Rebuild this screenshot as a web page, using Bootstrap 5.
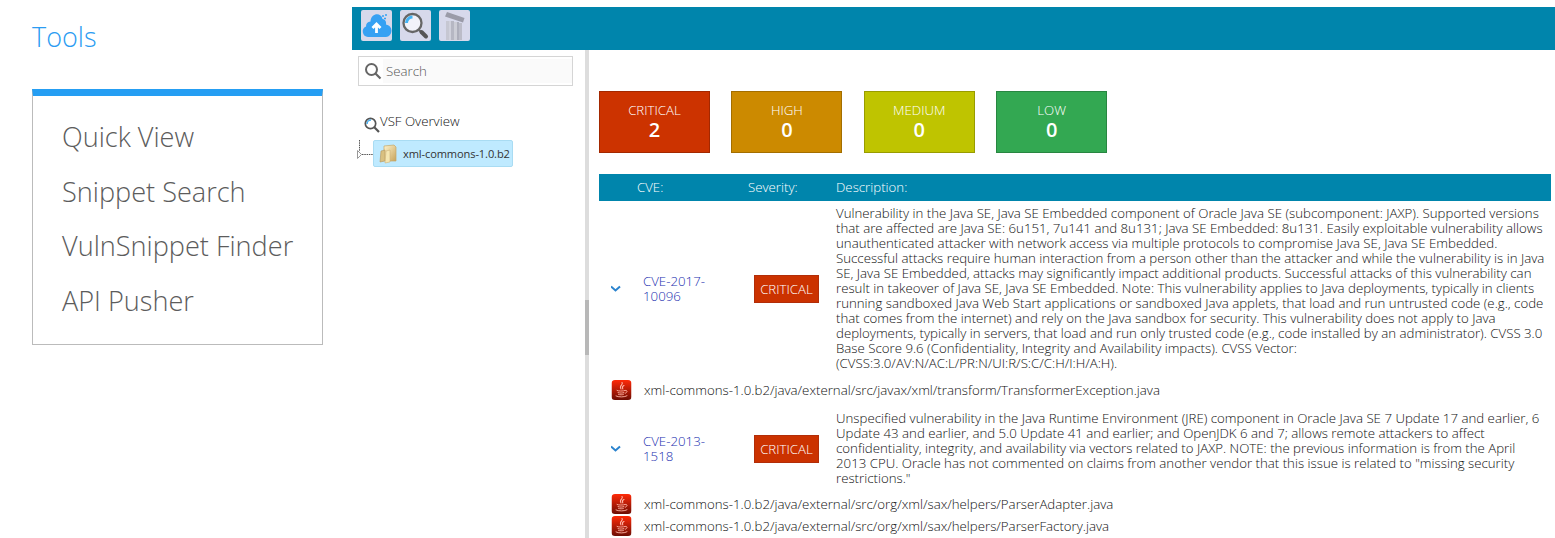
<!DOCTYPE html>
<html lang="en">
<head>
<meta charset="utf-8">
<title>VulnSnippet Finder</title>
<link href="https://cdn.jsdelivr.net/npm/bootstrap@5.3.0/dist/css/bootstrap.min.css" rel="stylesheet">
<style>
body{font-family:"Open Sans",sans-serif;font-weight:300;font-size:13.25px;line-height:15px;color:#111;background:#fff;width:1555px;height:538px;overflow:hidden}
.tools{width:352px;padding:20px 30px 0 32px}
.tools h1{font-size:27px;line-height:34px;font-weight:300;color:#2b9cf2;margin:0 0 35px}
.toolbox{border:1px solid #bbb;border-top:7px solid #259ef3;height:256px;padding:14px 0 0 29px;width:291px}
.toolbox a{display:block;font-size:27.1px;line-height:54.6px;color:#5c5c5c;text-decoration:none;white-space:nowrap}
.vsf{width:1203px;padding-top:7px}
.topbar{height:43px;background:#0085ac;padding:3px 0 0 9px;gap:8px}
.toolbtn{width:31px;height:31px;background:#d7d9eb;border:0;border-radius:2px;padding:0}
.side{width:233px;padding:6px 0 0 4px}
.searchbox{width:215px;height:30px;border:1px solid #d5d5d5;margin-left:2px;padding-left:5px}
.searchbox span{background:#fafafa;flex:1;height:24px;line-height:24px;padding-left:3px;margin-left:1px;color:#555}
.splitter{width:4px;background:#ddd;padding-top:250px}
.splitter div{height:55px;background:#b8b8b8}
.overview{margin:28px 0 0 8px;height:18px}
.overview svg{margin-top:3px}
.treeitem{width:140px;height:27px;background:#bfeaff;border:1px solid #a9dcf3;border-radius:2px;padding-left:5px;gap:6px;font-size:11.1px;font-weight:400;letter-spacing:-.12px;color:#333;white-space:nowrap}
.main{padding:41px 4px 0 10px}
.stat{width:111px;height:62px;color:#fff;padding-top:11px;border:1px solid #0003;text-align:center}
.stat b{display:block;font-size:20px;line-height:23px;font-weight:600}
.tiles{gap:21.4px;margin-bottom:21px}
.cverow{display:grid;grid-template-columns:38px 111px 88px 1fr;align-items:center;white-space:nowrap}
.head{height:27px;background:#0085ac;color:#fff}
.sev{background:#cb3200;border:1px solid #b22d08;color:#fff;width:65px;height:28px;line-height:26px;text-align:center;margin-left:6px}
.cve{color:#2430b0;padding-left:6px}
.filerow{height:22px;padding-left:12px;gap:12px;white-space:nowrap}
</style>
<script src="https://cdn.jsdelivr.net/npm/bootstrap@5.3.0/dist/js/bootstrap.bundle.min.js"></script>
</head>
<body class="d-flex">
<svg width="0" height="0" class="position-absolute"><defs>
<linearGradient id="jred" x2="0" y2="1"><stop stop-color="#ff2a08"/><stop offset="1" stop-color="#6d0d04"/></linearGradient>
<linearGradient id="tan" x2="1" y2="1"><stop stop-color="#fff4cd"/><stop offset="1" stop-color="#c8a45c"/></linearGradient>
<symbol id="java" viewBox="0 0 20 20"><rect width="20" height="20" rx="3.500" fill="url(#jred)"/><g fill="none" stroke="#ffb5a5" stroke-linecap="round"><path d="M10.5 2.500c2 2-3.500 3-1 6.500M12.500 5.500c-2.500 1-1.500 2-1.200 3.500" stroke-width="1.100"/><path d="M5.500 10.500c1 .8 6.500.8 8 0M6.500 12.600c1.500.7 5 .7 6 0M7 14.400c1.500.6 4 .6 5 0M14 10.500c2.500-.5 2 2-.3 2.800M4.500 16c2 1.300 9 1.300 11-.2" stroke-width=".9"/></g></symbol>
<symbol id="lens" viewBox="0 0 16 16"><circle cx="6.500" cy="6.500" r="5.200" fill="#fff" fill-opacity=".5" stroke="#555" stroke-width="1.700"/><path d="M10.300 10.300l4.700 4.700" stroke="#555" stroke-width="2.200"/></symbol>
</defs></svg>
<aside class="tools flex-shrink-0"><h1>Tools</h1>
<nav class="toolbox"><a href="#">Quick View</a><a href="#">Snippet Search</a><a href="#">VulnSnippet Finder</a><a href="#">API Pusher</a></nav></aside>
<div class="vsf d-flex flex-column flex-shrink-0">
<header class="topbar d-flex flex-shrink-0">
<button class="toolbtn"><svg class="d-block" width="31" height="31"><path d="M7 27a5.500 5.500 0 0 1-2-10.500 5 5 0 0 1 4.500-5C10 3 20 2 21.500 9c3 .5 4 3 3.500 5.500A6.300 6.300 0 0 1 25 27z" fill="#36a1f3"/><path d="M15.500 23v-8M11.500 18l4-4 4 4" fill="none" stroke="#fff" stroke-width="2.800"/><path d="M21 6h2M24 5h2M23 8.500h2" stroke="#36a1f3" stroke-width="1.500"/></svg></button>
<button class="toolbtn"><svg class="d-block" width="31" height="31"><circle cx="12.500" cy="13" r="9" fill="#f2f2fa" stroke="#666" stroke-width="2.300"/><path d="M6.500 13a6 6 0 0 1 6-6" fill="none" stroke="#42b3f4" stroke-width="3"/><path d="M18.500 19.500l3 3" stroke="#666" stroke-width="2"/><path d="M21.500 22l4.500 4.500" stroke="#555" stroke-width="4" stroke-linecap="round"/></svg></button>
<button class="toolbtn"><svg class="d-block" width="31" height="31"><path d="M8 2l17.500 6-1.500 4.500-18-6z" fill="#9a9ba8"/><path d="M7 11h3v19H7z" fill="#c6c7d2"/><path d="M10 11h2v19h-2z" fill="#d0d1dc"/><path d="M12 11h3v19h-3z" fill="#b6b7c3"/><path d="M15 12h3v18h-3z" fill="#cccdd6"/><path d="M18 12h2v18h-2z" fill="#adaebb"/><path d="M20 13h3v17h-3z" fill="#bbbcc8"/></svg></button>
</header>
<div class="d-flex flex-grow-1">
<aside class="side flex-shrink-0">
<div class="searchbox d-flex align-items-center"><svg width="18" height="18" viewBox="0 0 18 18"><circle cx="7.500" cy="7.500" r="5.500" fill="none" stroke="#666" stroke-width="2"/><path d="M11.500 11.500l5 5" stroke="#666" stroke-width="2.200"/></svg><span>Search</span></div>
<div class="overview d-flex"><svg width="16" height="16"><use href="#lens" width="16" height="16"/><path d="M3 7a4 4 0 0 1 4-4" fill="none" stroke="#43aef0" stroke-width="1.500"/></svg><span>VSF Overview</span></div>
<div class="d-flex mt-2"><svg width="17" height="27"><path d="M3.500 0v11M6 14.500h11" stroke="#555" stroke-dasharray="1.500 .8"/><path d="M1.500 10.500v8l4-4z" fill="#fff" stroke="#999"/></svg>
<div class="treeitem d-flex align-items-center"><svg class="flex-shrink-0" width="18" height="20" viewBox="0 0 18 20"><path d="M5 2l10-1 2 2v14H8L5 16z" fill="url(#tan)" stroke="#c4a868" stroke-width=".7"/><path d="M2 7l4-1v11l-5 1z" fill="#d9c081" stroke="#b5965a" stroke-width=".6"/><path d="M7 7l4-1v12l-5 1z" fill="#f5e6b2" stroke="#cfb378" stroke-width=".6"/></svg><span>xml-commons-1.0.b2</span></div></div>
</aside>
<div class="splitter flex-shrink-0"><div></div></div>
<main class="main flex-grow-1">
<div class="tiles d-flex">
<div class="stat" style="background:#cc3300">CRITICAL<b>2</b></div><div class="stat" style="background:#cc8a00">HIGH<b>0</b></div><div class="stat" style="background:#bfc400">MEDIUM<b>0</b></div><div class="stat" style="background:#33a852">LOW<b>0</b></div></div>
<div class="cverow head"><i></i><span>CVE:</span><span>Severity:</span><span>Description:</span></div>
<div class="cverow" style="height:175px"><svg class="ms-2 ps-1" width="17" height="10"><path d="M0 2.500l4.500 4 4.500-4" fill="none" stroke="#2b83ce" stroke-width="2"/></svg><span class="cve">CVE-2017-<br>10096</span><span class="sev">CRITICAL</span>
<div>Vulnerability in the Java SE, Java SE Embedded component of Oracle Java SE (subcomponent: JAXP). Supported versions<br>that are affected are Java SE: 6u151, 7u141 and 8u131; Java SE Embedded: 8u131. Easily exploitable vulnerability allows<br>unauthenticated attacker with network access via multiple protocols to compromise Java SE, Java SE Embedded.<br>Successful attacks require human interaction from a person other than the attacker and while the vulnerability is in Java<br>SE, Java SE Embedded, attacks may significantly impact additional products. Successful attacks of this vulnerability can<br>result in takeover of Java SE, Java SE Embedded. Note: This vulnerability applies to Java deployments, typically in clients<br>running sandboxed Java Web Start applications or sandboxed Java applets, that load and run untrusted code (e.g., code<br>that comes from the internet) and rely on the Java sandbox for security. This vulnerability does not apply to Java<br>deployments, typically in servers, that load and run only trusted code (e.g., code installed by an administrator). CVSS 3.0<br>Base Score 9.6 (Confidentiality, Integrity and Availability impacts). CVSS Vector:<br>(CVSS:3.0/AV:N/AC:L/PR:N/UI:R/S:C/C:H/I:H/A:H).</div></div>
<div class="filerow d-flex align-items-center" style="height:28px"><svg width="21" height="20"><use href="#java" x=".5" width="20" height="20"/></svg><span>xml-commons-1.0.b2/java/external/src/javax/xml/transform/TransformerException.java</span></div>
<div class="cverow" style="height:89px"><svg class="ms-2 ps-1" width="17" height="10"><path d="M0 2.500l4.500 4 4.500-4" fill="none" stroke="#2b83ce" stroke-width="2"/></svg><span class="cve">CVE-2013-<br>1518</span><span class="sev">CRITICAL</span>
<div>Unspecified vulnerability in the Java Runtime Environment (JRE) component in Oracle Java SE 7 Update 17 and earlier, 6<br>Update 43 and earlier, and 5.0 Update 41 and earlier; and OpenJDK 6 and 7; allows remote attackers to affect<br>confidentiality, integrity, and availability via vectors related to JAXP. NOTE: the previous information is from the April<br>2013 CPU. Oracle has not commented on claims from another vendor that this issue is related to "missing security<br>restrictions."</div></div>
<div class="filerow d-flex align-items-center"><svg width="21" height="20"><use href="#java" x=".5" width="20" height="20"/></svg><span>xml-commons-1.0.b2/java/external/src/org/xml/sax/helpers/ParserAdapter.java</span></div>
<div class="filerow d-flex align-items-center"><svg width="21" height="20"><use href="#java" x=".5" width="20" height="20"/></svg><span>xml-commons-1.0.b2/java/external/src/org/xml/sax/helpers/ParserFactory.java</span></div>
</main></div></div>
</body>
</html>
